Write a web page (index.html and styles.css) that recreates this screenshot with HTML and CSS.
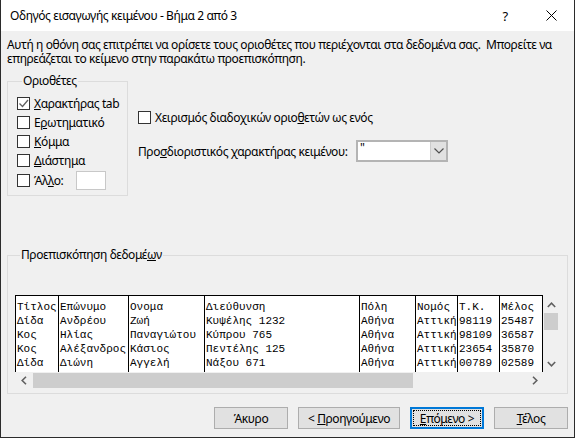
FILE: index.html
```html
<!DOCTYPE html>
<html>
<head>
  <meta charset="UTF-8">
  <title>Οδηγός εισαγωγής κειμένου</title>
  <link rel="stylesheet" href="styles.css">
</head>
<body>
  <div class="window">
    <div class="title-bar">
      <span class="title">Οδηγός εισαγωγής κειμένου - Βήμα 2 από 3</span>
      <div class="caption-buttons">
        <span class="help-button">?</span>
        <span class="close-button">
          <svg width="11" height="11" viewBox="0 0 11 11"><path d="M0.5 0.5 L10.5 10.5 M10.5 0.5 L0.5 10.5" stroke="#000" stroke-width="1" fill="none"/></svg>
        </span>
      </div>
    </div>

    <div class="content">
      <p class="intro">Αυτή η οθόνη σας επιτρέπει να ορίσετε τους οριοθέτες που περιέχονται στα δεδομένα σας.&nbsp; Μπορείτε να<br>επηρεάζεται το κείμενο στην παρακάτω προεπισκόπηση.</p>

      <div class="options">
        <fieldset class="group delimiters">
          <legend>Οριοθέτες</legend>
          <label class="check">
            <span class="box"><svg width="11" height="11" viewBox="0 0 11 11"><path d="M1.5 5.5 L4.5 8.5 L10 2" stroke="#606060" stroke-width="1.3" fill="none"/></svg></span>
            <span><u>Χ</u>αρακτήρας tab</span>
          </label>
          <label class="check">
            <span class="box"></span>
            <span>Ε<u>ρ</u>ωτηματικό</span>
          </label>
          <label class="check">
            <span class="box"></span>
            <span><u>Κ</u>όμμα</span>
          </label>
          <label class="check">
            <span class="box"></span>
            <span><u>Δ</u>ιάστημα</span>
          </label>
          <label class="check other">
            <span class="box"></span>
            <span>Άλ<u>λ</u>ο:</span>
            <span class="other-field"></span>
          </label>
        </fieldset>

        <div class="side-options">
          <label class="check">
            <span class="box"></span>
            <span>Χειρισμός διαδοχικών οριο<u>θ</u>ετών ως ενός</span>
          </label>
          <div class="qualifier">
            <span class="qualifier-label">Προ<u>σ</u>διοριστικός χαρακτήρας κειμένου:</span>
            <div class="combo">
              <span class="combo-value">"</span>
              <span class="combo-arrow">
                <svg width="10" height="6" viewBox="0 0 10 6"><path d="M0.5 0.5 L5 5 L9.5 0.5" stroke="#505050" stroke-width="1.2" fill="none"/></svg>
              </span>
            </div>
          </div>
        </div>
      </div>

      <fieldset class="group preview">
        <legend>Προεπισκόπηση δεδομέ<u>ω</u>ν</legend>
        <div class="preview-box">
          <div class="preview-main">
            <div class="grid">
              <div class="col c1"><div>Τίτλος</div><div>Δίδα</div><div>Κος</div><div>Κος</div><div>Δίδα</div></div>
              <div class="col c2"><div>Επώνυμο</div><div>Ανδρέου</div><div>Ηλίας</div><div>Αλέξανδρος</div><div>Διώνη</div></div>
              <div class="col c3"><div>Ονομα</div><div>Ζωή</div><div>Παναγιώτου</div><div>Κάσιος</div><div>Αγγελή</div></div>
              <div class="col c4"><div>Διεύθυνση</div><div>Κυψέλης 1232</div><div>Κύπρου 765</div><div>Πεντέλης 125</div><div>Νάξου 671</div></div>
              <div class="col c5"><div>Πόλη</div><div>Αθήνα</div><div>Αθήνα</div><div>Αθήνα</div><div>Αθήνα</div></div>
              <div class="col c6"><div>Νομός</div><div>Αττική</div><div>Αττική</div><div>Αττική</div><div>Αττική</div></div>
              <div class="col c7"><div>Τ.Κ.</div><div>98119</div><div>98109</div><div>23654</div><div>00789</div></div>
              <div class="col c8"><div>Μέλος</div><div>25487</div><div>36587</div><div>35870</div><div>02589</div></div>
            </div>
            <div class="vscroll">
              <span class="scroll-btn"><svg width="9" height="6" viewBox="0 0 9 6"><path d="M0.8 5 L4.5 1.2 L8.2 5" stroke="#606060" stroke-width="1.6" fill="none"/></svg></span>
              <span class="vthumb"></span>
              <span class="scroll-btn"><svg width="9" height="6" viewBox="0 0 9 6"><path d="M0.8 1 L4.5 4.8 L8.2 1" stroke="#606060" stroke-width="1.6" fill="none"/></svg></span>
            </div>
          </div>
          <div class="hscroll">
            <span class="scroll-btn"><svg width="6" height="9" viewBox="0 0 6 9"><path d="M5 0.8 L1.2 4.5 L5 8.2" stroke="#606060" stroke-width="1.6" fill="none"/></svg></span>
            <span class="hthumb"></span>
            <span class="scroll-btn"><svg width="6" height="9" viewBox="0 0 6 9"><path d="M1 0.8 L4.8 4.5 L1 8.2" stroke="#606060" stroke-width="1.6" fill="none"/></svg></span>
          </div>
        </div>
      </fieldset>
    </div>

    <div class="button-row">
      <button class="btn"><span>Άκυρο</span></button>
      <button class="btn wide"><span>&lt; <u>Π</u>ροηγούμενο</span></button>
      <button class="btn default"><span class="focus"><span><u>Ε</u>πόμενο &gt;</span></span></button>
      <button class="btn"><span><u>Τ</u>έλος</span></button>
    </div>
  </div>
</body>
</html>
```

FILE: styles.css
```css
:root {
  --face: #f0f0f0;
  --text: #000000;
  --group-line: #dcdcdc;
  --button-face: #e1e1e1;
  --button-border: #adadad;
  --accent: #0078d7;
  --thumb: #cdcdcd;
}

* {
  box-sizing: border-box;
}

body {
  margin: 0;
  font-family: "Noto Sans", "Open Sans", sans-serif;
  font-size: 12px;
  letter-spacing: -0.4px;
  color: var(--text);
  background: var(--face);
}

.window {
  width: 575px;
  height: 438px;
  display: flex;
  flex-direction: column;
  background: var(--face);
  border: 1px solid #2b2b2b;
  border-top: none;
}

/* title bar */
.title-bar {
  height: 31px;
  flex: none;
  background: #ffffff;
  display: flex;
  align-items: center;
  justify-content: space-between;
  padding-left: 9px;
}

.title {
  line-height: 16px;
}

.caption-buttons {
  display: flex;
  align-items: center;
  height: 100%;
}

.help-button {
  width: 46px;
  text-align: center;
  font-size: 13px;
}

.close-button {
  width: 46px;
  height: 100%;
  display: flex;
  align-items: center;
  justify-content: center;
}

/* dialog body */
.content {
  flex: 1;
  padding: 0 6px;
}

.intro {
  margin: 7px 0 0;
  line-height: 14px;
  white-space: nowrap;
}

.options {
  display: flex;
  margin-top: 8px;
}

.group {
  margin: 0;
  padding: 0;
  border: 1px solid var(--group-line);
  min-width: 0;
}

.group legend {
  margin-left: 5px;
  padding: 0 1px;
  line-height: 14px;
}

.delimiters {
  width: 121px;
  height: 122px;
  padding: 6px 0 0 9px;
}

.check {
  display: flex;
  align-items: center;
  gap: 4px;
  height: 19px;
  white-space: nowrap;
}

.box {
  width: 13px;
  height: 13px;
  flex: none;
  background: #ffffff;
  border: 1px solid #333333;
  display: flex;
  align-items: center;
  justify-content: center;
}

.other-field {
  width: 30px;
  height: 19px;
  margin-left: 9px;
  background: #ffffff;
  border: 1px solid #c8c8c8;
}

.check.other {
  height: 21px;
}

.side-options {
  margin-left: 10px;
  padding-top: 34px;
}

.qualifier {
  display: flex;
  align-items: center;
  margin-top: 13px;
}

.qualifier-label {
  width: 218px;
  white-space: nowrap;
}

.combo {
  width: 92px;
  height: 22px;
  display: flex;
  background: #ffffff;
  border: 2px solid #b4b4b4;
}

.combo-value {
  flex: 1;
  padding-left: 2px;
  line-height: 12px;
}

.combo-arrow {
  width: 16px;
  background: #e1e1e1;
  border-left: 1px solid #cccccc;
  display: flex;
  align-items: center;
  justify-content: center;
}

/* data preview */
.preview {
  margin-top: 52px;
  height: 146px;
  padding: 33px 7px 0 7px;
}

.preview-box {
  width: 544px;
}

.preview-main {
  display: flex;
}

.grid {
  display: flex;
  border-top: 1px solid #000000;
  background: #ffffff;
  height: 77px;
  font-family: "Liberation Mono", "DejaVu Sans Mono", monospace;
  font-size: 11px;
  line-height: 14px;
  letter-spacing: 0;
}

.col {
  border-left: 1px solid #000000;
  padding: 4px 0 0 1px;
  white-space: nowrap;
  overflow: hidden;
}

.c1 { width: 43px; }
.c2 { width: 70px; }
.c3 { width: 76px; }
.c4 { width: 155px; }
.c5 { width: 56px; }
.c6 { width: 42px; }
.c7 { width: 42px; }
.c8 { width: 44px; border-right: 1px solid #000000; }

.vscroll {
  width: 17px;
  margin-top: 1px;
  display: flex;
  flex-direction: column;
  justify-content: space-between;
}

.vscroll .scroll-btn {
  height: 17px;
  display: flex;
  align-items: center;
  justify-content: center;
}

.vthumb {
  height: 17px;
  margin: 0 1px auto;
  background: var(--thumb);
}

.hscroll {
  width: 528px;
  height: 17px;
  display: flex;
  align-items: center;
}

.hscroll .scroll-btn {
  width: 17px;
  height: 17px;
  display: flex;
  align-items: center;
  justify-content: center;
}

.hthumb {
  width: 380px;
  height: 15px;
  margin-left: 1px;
  margin-right: auto;
  background: var(--thumb);
}

/* dialog buttons */
.button-row {
  display: flex;
  justify-content: flex-end;
  gap: 10px;
  padding: 0 6px 8px 0;
}

.btn {
  width: 74px;
  height: 22px;
  padding: 0;
  font-family: inherit;
  font-size: 12px;
  letter-spacing: -0.4px;
  color: var(--text);
  background: var(--button-face);
  border: 1px solid var(--button-border);
  display: flex;
  align-items: center;
  justify-content: center;
}

.btn.wide {
  width: 102px;
}

.btn.default {
  border: 2px solid var(--accent);
  padding: 1px;
}

.btn.default .focus {
  width: 100%;
  height: 100%;
  border: 1px dotted #000000;
  display: flex;
  align-items: center;
  justify-content: center;
}
```
